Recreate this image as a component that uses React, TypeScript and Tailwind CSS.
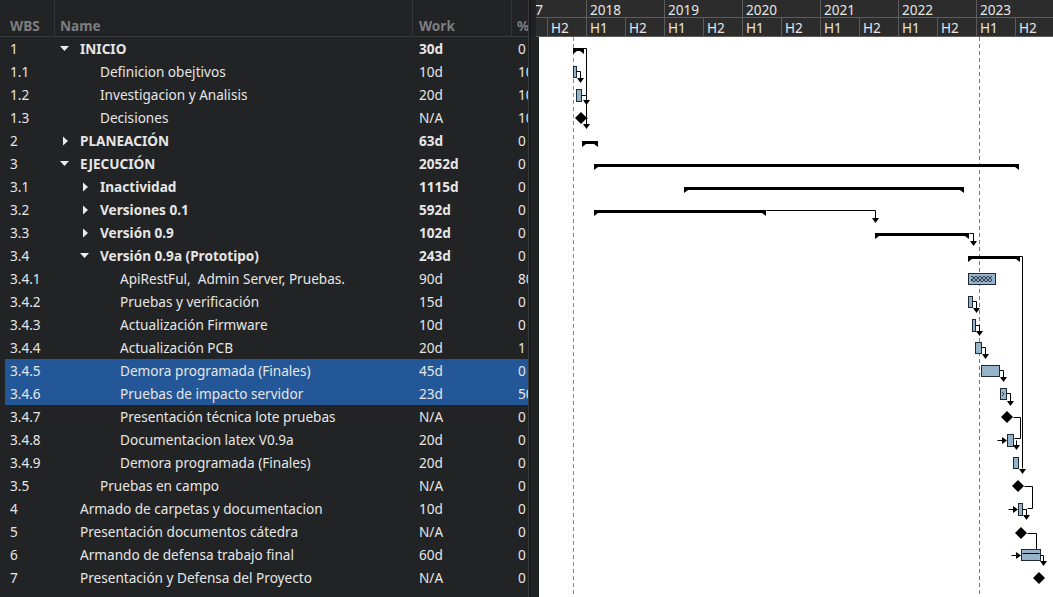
import React from "react";

type Row = {
  wbs: string;
  name: string;
  work: string;
  pct: string;
  depth: number;
  bold?: boolean;
  toggle?: "open" | "closed";
  selected?: boolean;
};

const rows: Row[] = [
  { wbs: "1", name: "INICIO", work: "30d", pct: "0", depth: 1, bold: true, toggle: "open" },
  { wbs: "1.1", name: "Definicion obejtivos", work: "10d", pct: "100", depth: 2 },
  { wbs: "1.2", name: "Investigacion y Analisis", work: "20d", pct: "100", depth: 2 },
  { wbs: "1.3", name: "Decisiones", work: "N/A", pct: "100", depth: 2 },
  { wbs: "2", name: "PLANEACIÓN", work: "63d", pct: "0", depth: 1, bold: true, toggle: "closed" },
  { wbs: "3", name: "EJECUCIÓN", work: "2052d", pct: "0", depth: 1, bold: true, toggle: "open" },
  { wbs: "3.1", name: "Inactividad", work: "1115d", pct: "0", depth: 2, bold: true, toggle: "closed" },
  { wbs: "3.2", name: "Versiones 0.1", work: "592d", pct: "0", depth: 2, bold: true, toggle: "closed" },
  { wbs: "3.3", name: "Versión 0.9", work: "102d", pct: "0", depth: 2, bold: true, toggle: "closed" },
  { wbs: "3.4", name: "Versión 0.9a (Prototipo)", work: "243d", pct: "0", depth: 2, bold: true, toggle: "open" },
  { wbs: "3.4.1", name: "ApiRestFul,  Admin Server, Pruebas.", work: "90d", pct: "80", depth: 3 },
  { wbs: "3.4.2", name: "Pruebas y verificación", work: "15d", pct: "0", depth: 3 },
  { wbs: "3.4.3", name: "Actualización Firmware", work: "10d", pct: "0", depth: 3 },
  { wbs: "3.4.4", name: "Actualización PCB", work: "20d", pct: "1", depth: 3 },
  { wbs: "3.4.5", name: "Demora programada (Finales)", work: "45d", pct: "0", depth: 3, selected: true },
  { wbs: "3.4.6", name: "Pruebas de impacto servidor", work: "23d", pct: "50", depth: 3, selected: true },
  { wbs: "3.4.7", name: "Presentación técnica lote pruebas", work: "N/A", pct: "0", depth: 3 },
  { wbs: "3.4.8", name: "Documentacion latex V0.9a", work: "20d", pct: "0", depth: 3 },
  { wbs: "3.4.9", name: "Demora programada (Finales)", work: "20d", pct: "0", depth: 3 },
  { wbs: "3.5", name: "Pruebas en campo", work: "N/A", pct: "0", depth: 2 },
  { wbs: "4", name: "Armado de carpetas y documentacion", work: "10d", pct: "0", depth: 1 },
  { wbs: "5", name: "Presentación documentos cátedra", work: "N/A", pct: "0", depth: 1 },
  { wbs: "6", name: "Armando de defensa trabajo final", work: "60d", pct: "0", depth: 1 },
  { wbs: "7", name: "Presentación y Defensa del Proyecto", work: "N/A", pct: "0", depth: 1 },
];

const years = ["2017", "2018", "2019", "2020", "2021", "2022", "2023"];

const indent: Record<number, string> = { 1: "pl-[25px]", 2: "pl-[45px]", 3: "pl-[65px]" };

const Toggle = ({ kind }: { kind: "open" | "closed" }) =>
  kind === "open" ? (
    <svg width="20" height="10" viewBox="0 0 20 10" className="shrink-0 -ml-[20px]">
      <path d="M0 2 L9 2 L4.5 7 Z" fill="#ececec" />
    </svg>
  ) : (
    <svg width="20" height="10" viewBox="0 0 20 10" className="shrink-0 -ml-[20px]">
      <path d="M3 0.5 L8 5 L3 9.5 Z" fill="#ececec" />
    </svg>
  );

// chart helpers (page coordinates)
const Summary = ({ x1, x2, y }: { x1: number; x2: number; y: number }) => (
  <path d={`M${x1} ${y} L${x2} ${y} L${x2} ${y + 6} L${x2 - 4} ${y + 3} L${x1 + 4} ${y + 3} L${x1} ${y + 6} Z`} fill="#000" />
);

const Bar = ({ x1, x2, y1, y2 }: { x1: number; x2: number; y1: number; y2: number }) => (
  <rect x={x1 + 0.5} y={y1 + 0.5} width={x2 - x1} height={y2 - y1} fill="#96b4c9" stroke="#1e2a33" strokeWidth="1" />
);

const Diamond = ({ cx, cy }: { cx: number; cy: number }) => (
  <path d={`M${cx} ${cy - 6} L${cx + 6} ${cy} L${cx} ${cy + 6} L${cx - 6} ${cy} Z`} fill="#000" />
);

const Down = ({ x, y }: { x: number; y: number }) => (
  <path d={`M${x - 3.5} ${y - 5} L${x + 3.5} ${y - 5} L${x} ${y} Z`} fill="#000" />
);

const Right = ({ x, y }: { x: number; y: number }) => (
  <path d={`M${x - 5} ${y - 3.5} L${x} ${y} L${x - 5} ${y + 3.5} Z`} fill="#000" />
);

const Line = ({ pts }: { pts: number[][] }) => (
  <polyline points={pts.map((p) => `${p[0] + 0.5},${p[1] + 0.5}`).join(" ")} fill="none" stroke="#000" strokeWidth="1" />
);

const Chart = () => (
  <svg width="514" height="560" viewBox="539 37 514 560" className="block">
    <defs>
      <pattern id="hatch" width="4" height="4" patternUnits="userSpaceOnUse">
        <rect width="4" height="4" fill="#8faac0" />
        <path d="M0 4 L4 0 M0 0 L4 4" stroke="#2a3440" strokeWidth="0.9" />
      </pattern>
    </defs>
    <line x1="573.5" y1="37" x2="573.5" y2="597" stroke="#8a8a8a" strokeDasharray="4 3" />
    <line x1="979.5" y1="37" x2="979.5" y2="597" stroke="#6b7aa0" strokeDasharray="4 3" />

    {/* INICIO */}
    <Summary x1={573} x2={584} y={48} />
    <Line pts={[[583, 48], [586, 48], [586, 125]]} />
    <Down x={586.5} y={129} />
    <Bar x1={573} x2={576} y1={66} y2={77} />
    <Line pts={[[576, 71], [580, 71], [580, 79]]} />
    <Down x={580.5} y={83} />
    <Bar x1={576} x2={581} y1={89} y2={101} />
    <Line pts={[[581, 95], [586, 95]]} />
    <Down x={586.5} y={105} />
    <Diamond cx={581} cy={118} />
    <Line pts={[[586, 118], [587, 118]]} />

    {/* PLANEACION */}
    <Summary x1={582} x2={598} y={141} />

    {/* EJECUCION */}
    <Summary x1={594} x2={1019} y={164} />
    <Summary x1={684} x2={964} y={187} />
    <Summary x1={594} x2={766} y={210} />
    <Line pts={[[766, 210], [875, 210], [875, 218]]} />
    <Down x={875.5} y={223} />
    <Summary x1={875} x2={969} y={233} />
    <Line pts={[[969, 233], [973, 233], [973, 241]]} />
    <Down x={973.5} y={246} />

    {/* Version 0.9a */}
    <Summary x1={968} x2={1020} y={256} />
    <Line pts={[[1019, 256], [1022, 256], [1022, 468]]} />
    <Down x={1022.5} y={474} />
    <rect x={968.5} y={273.5} width={27} height={11} fill="#96b4c9" stroke="#1e2a33" />
    <rect x={971} y={276} width={21} height={6} fill="url(#hatch)" />
    <Bar x1={968} x2={972} y1={296} y2={307} />
    <Line pts={[[972, 301], [976, 301], [976, 308]]} />
    <Down x={976.5} y={313} />
    <Bar x1={972} x2={975} y1={319} y2={331} />
    <Line pts={[[975, 325], [979, 325], [979, 331]]} />
    <Down x={979.5} y={336} />
    <Bar x1={975} x2={981} y1={342} y2={353} />
    <Line pts={[[981, 347], [985, 347], [985, 354]]} />
    <Down x={985.5} y={359} />
    <Bar x1={981} x2={999} y1={365} y2={376} />
    <Line pts={[[999, 370], [1003, 370], [1003, 377]]} />
    <Down x={1003.5} y={382} />
    <Bar x1={1000} x2={1006} y1={388} y2={399} />
    <path d="M1002 392 L1004 394 L1002 396" fill="none" stroke="#1e2a33" strokeWidth="0.8" />
    <Line pts={[[1006, 393], [1010, 393], [1010, 401]]} />
    <Down x={1010.5} y={406} />
    <Diamond cx={1007} cy={417} />
    <Line pts={[[1013, 417], [1020, 417], [1020, 438], [1014, 438]]} />
    <Line pts={[[997, 440], [1003, 440]]} />
    <Right x={1007} y={440.5} />
    <Bar x1={1007} x2={1013} y1={434} y2={446} />
    <Line pts={[[1016, 440], [1016, 445]]} />
    <Down x={1016.5} y={450} />
    <Bar x1={1013} x2={1018} y1={457} y2={468} />
    <Diamond cx={1018} cy={486} />
    <Line pts={[[1024, 486], [1032, 486], [1032, 508], [1027, 508]]} />

    {/* tail tasks */}
    <Line pts={[[1008, 509], [1014, 509]]} />
    <Right x={1018} y={509.5} />
    <Bar x1={1018} x2={1022} y1={503} y2={515} />
    <Line pts={[[1022, 509], [1026, 509], [1026, 515]]} />
    <Down x={1026.5} y={520} />
    <Diamond cx={1021} cy={533} />
    <Line pts={[[1027, 533], [1036, 533], [1036, 552]]} />
    <Line pts={[[1011, 555], [1017, 555]]} />
    <Right x={1021} y={555.5} />
    <Bar x1={1021} x2={1040} y1={549} y2={560} />
    <Line pts={[[1022, 553], [1039, 553]]} />
    <Line pts={[[1040, 555], [1043, 555], [1043, 561]]} />
    <Down x={1043.5} y={566} />
    <Diamond cx={1039} cy={578} />
  </svg>
);

export default function App() {
  return (
    <div
      className="w-[1053px] h-[597px] overflow-hidden flex bg-[#222324] text-[13.6px] text-[#e6e6e6]"
      style={{ fontFamily: '"Noto Sans", "Open Sans", sans-serif' }}
    >
      {/* task table */}
      <div className="w-[528px] shrink-0 flex flex-col overflow-hidden">
        <div className="h-[37px] flex border-b border-[#3a3b3c] font-bold text-[#7d7e80] shrink-0">
          <div className="w-[55px] border-r border-[#34353a] flex items-end pl-[10px]">WBS</div>
          <div className="w-[358px] border-r border-[#34353a] flex items-end pl-[5px]">Name</div>
          <div className="w-[99px] border-r border-[#34353a] flex items-end pl-[6px]">Work</div>
          <div className="flex-1 flex items-end pl-[5px] overflow-hidden">%</div>
        </div>
        <div className="flex flex-col pl-[5px]">
          {rows.map((r) => (
            <div
              key={r.wbs}
              className={`h-[23px] pt-[2px] flex items-center whitespace-pre ${r.selected ? "bg-[#245797]" : ""}`}
            >
              <div className="w-[50px] pl-[5px] shrink-0">{r.wbs}</div>
              <div className={`w-[358px] shrink-0 flex items-center ${indent[r.depth]} ${r.bold ? "font-bold" : ""}`}>
                {r.toggle && <Toggle kind={r.toggle} />}
                <span>{r.name}</span>
              </div>
              <div className={`w-[99px] shrink-0 pl-[6px] ${r.bold ? "font-bold" : ""}`}>{r.work}</div>
              <div className="flex-1 pl-[6px] overflow-hidden">{r.pct}</div>
            </div>
          ))}
        </div>
      </div>

      {/* splitter */}
      <div className="w-[3px] shrink-0 bg-[#1a1a1b] border-l border-[#3a3b3c]" />

      {/* gantt */}
      <div className="flex-1 flex flex-col overflow-hidden">
        <div className="h-[37px] shrink-0 flex">
          <div className="w-[5px] shrink-0 bg-[#1f2021]" />
          <div className="flex-1 bg-[#2c2c2d] border-b border-[#5c5c5c] overflow-hidden">
            <div className="flex h-[18px] -ml-[27px] border-b border-[#5c5c5c]">
              {years.map((y) => (
                <div key={y} className="w-[78px] shrink-0 border-r border-[#5c5c5c] pl-[3px] leading-[19px]">
                  {y}
                </div>
              ))}
            </div>
            <div className="flex h-[18px] -ml-[27px]">
              {years.map((y) => (
                <React.Fragment key={y}>
                  <div className="w-[39px] shrink-0 border-r border-[#5c5c5c] pl-[3px] leading-[19px]">H1</div>
                  <div className="w-[39px] shrink-0 border-r border-[#5c5c5c] pl-[3px] leading-[19px]">H2</div>
                </React.Fragment>
              ))}
            </div>
          </div>
        </div>
        <div className="flex-1 flex">
          <div className="w-[8px] shrink-0 bg-[#222324]" />
          <div className="flex-1 bg-white">
            <Chart />
          </div>
        </div>
      </div>
    </div>
  );
}
